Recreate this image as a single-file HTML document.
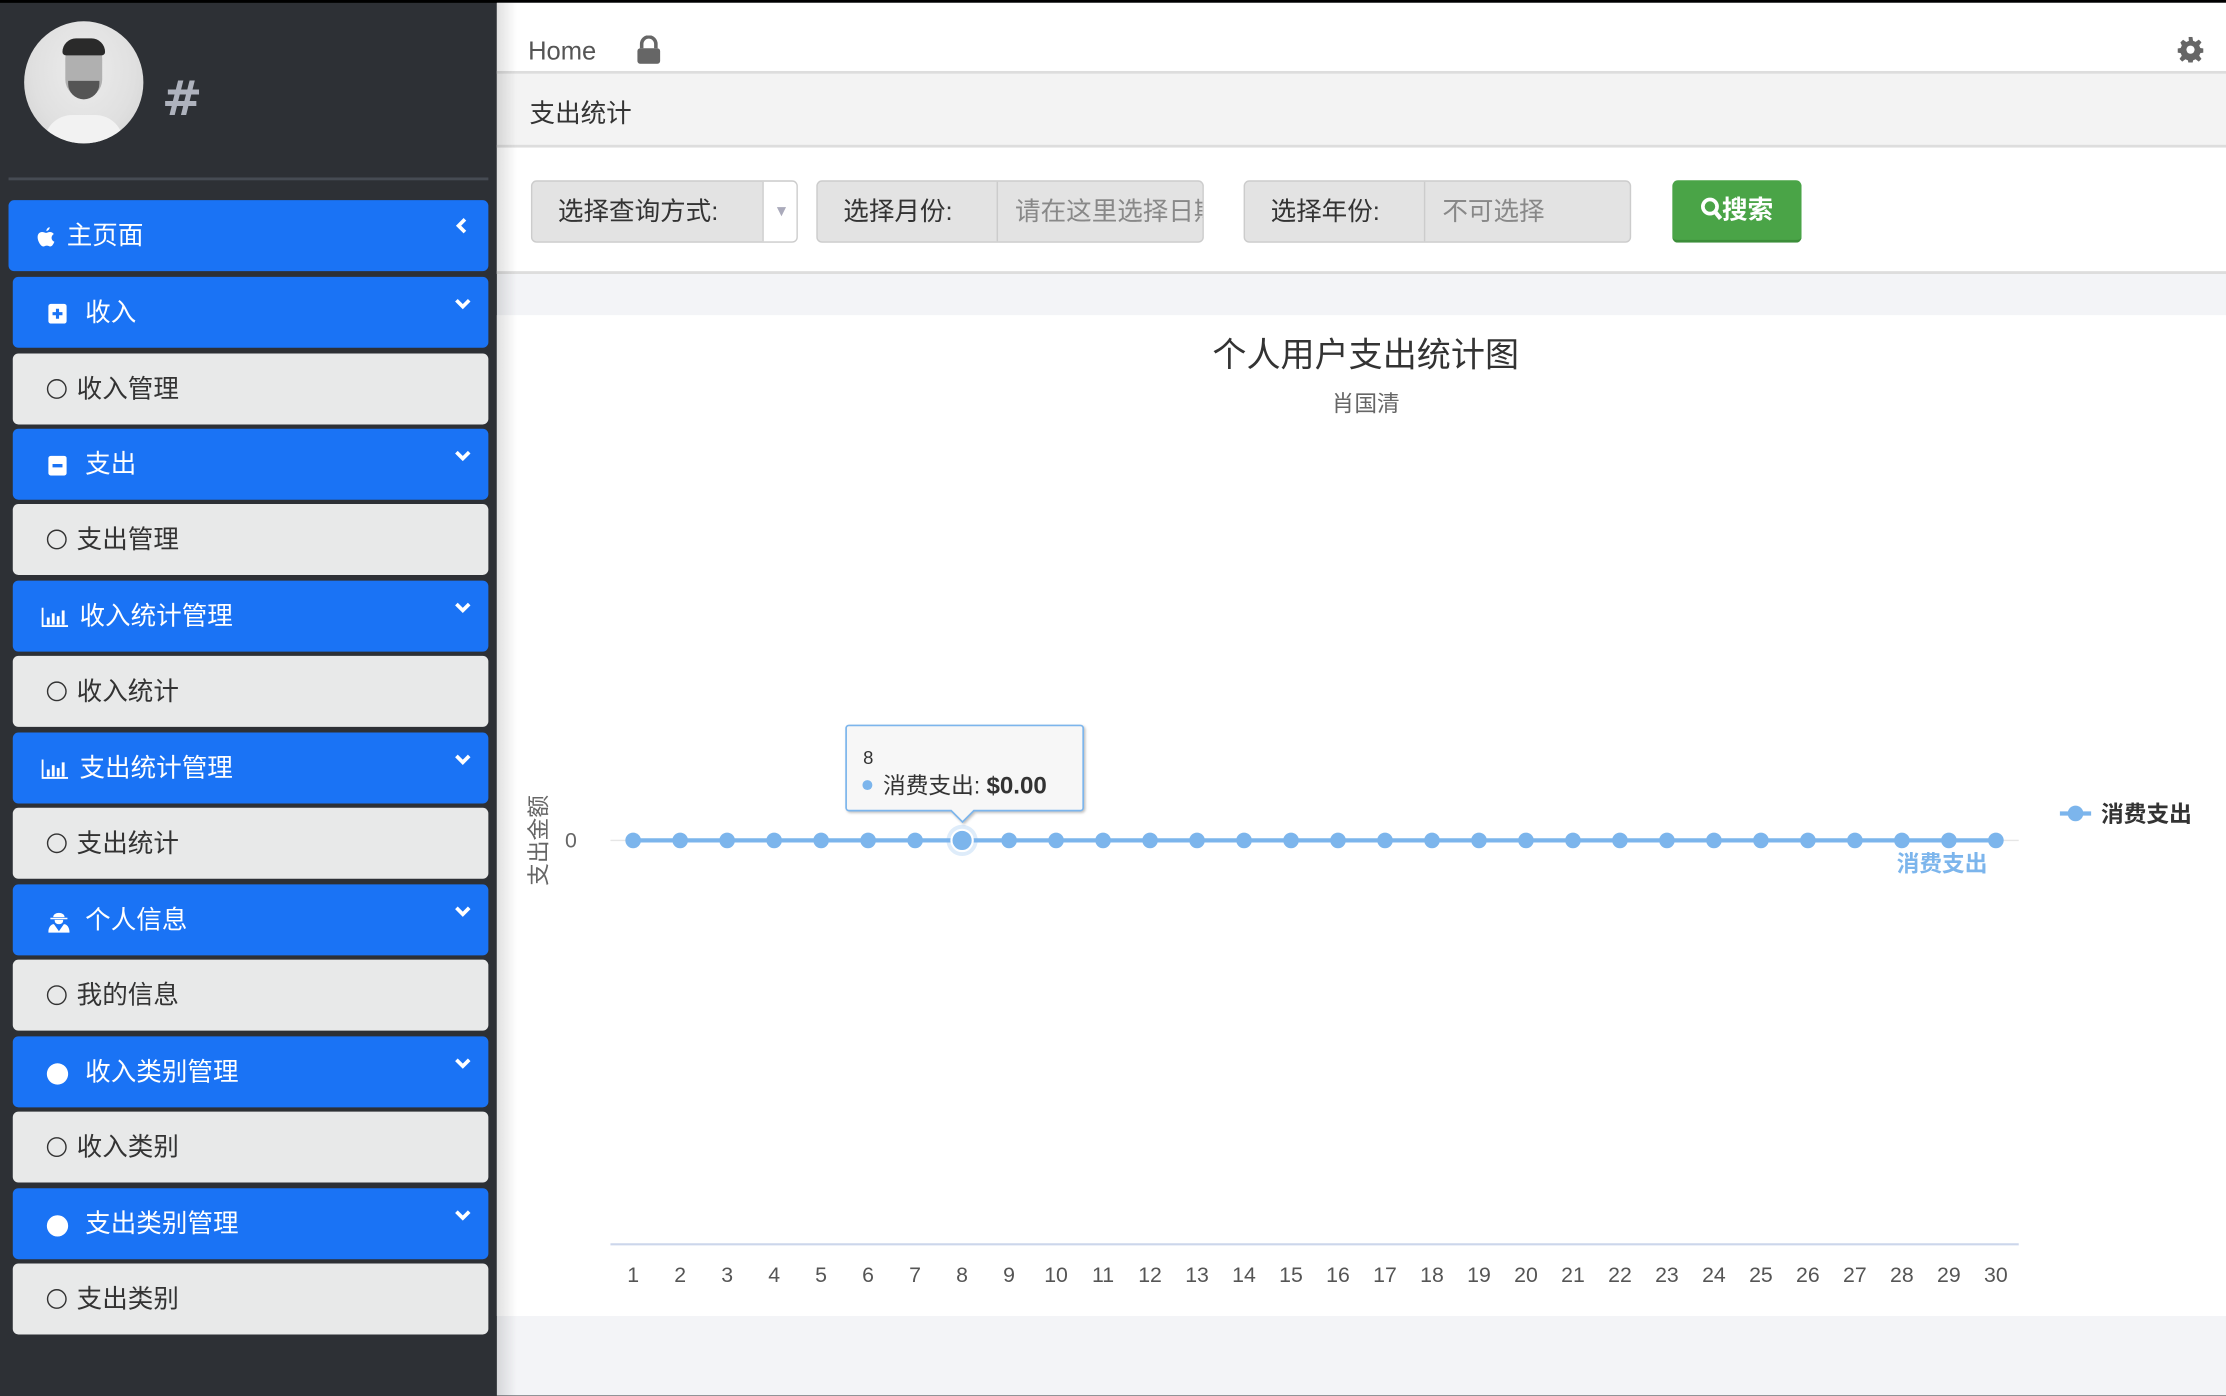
<!DOCTYPE html>
<html><head><meta charset="utf-8">
<style>
*{margin:0;padding:0;box-sizing:border-box}
html,body{width:2226px;height:1396px;overflow:hidden;background:#2d3035}
#w{position:absolute;left:0;top:0;width:1568px;height:983px;transform:scale(1.41964);transform-origin:0 0;font-family:"Liberation Sans","Noto Sans CJK SC",sans-serif}
.a{position:absolute}
.mi{position:absolute;left:9px;width:335px;height:50px;border-radius:4px;font-size:18px;line-height:50px;padding-left:25px}
.b{background:#1a73f5;color:#fff}
.g{background:#e8e9e9;color:#333}
.chev{position:absolute;right:12px;top:15px}
.circ{display:inline-block;width:14px;height:14px;border:1.6px solid #333;border-radius:50%;vertical-align:-1px;margin-right:7px}
.ico{display:inline-block;width:26px;text-align:left;vertical-align:middle;line-height:0}
.grp{position:absolute;top:127px;height:44px;border:1px solid #ccc;border-radius:4px;background:#e3e3e3;font-size:18px;line-height:42px;overflow:hidden}
.lab{position:absolute;left:0;top:0;height:42px;padding-left:18px;color:#333}
.inp{position:absolute;top:0;height:42px;border-left:1px solid #ccc;padding-left:12px;color:#888;white-space:nowrap;overflow:hidden}
</style></head><body><div id="w">
<div class="a" style="left:0;top:0;width:1568px;height:2px;background:#000"></div>
<div class="a" style="left:17px;top:15px;width:84px;height:86px;border-radius:50%;background:radial-gradient(ellipse at 50% 40%,#ececec 0,#e0e0e0 60%,#d0d0d0 100%);overflow:hidden">
 <div class="a" style="left:29px;top:18px;width:26px;height:36px;background:#b0b0b0;border-radius:8px 8px 13px 13px"></div>
 <div class="a" style="left:27px;top:12px;width:30px;height:12px;background:#2a2a2a;border-radius:12px 12px 3px 3px"></div>
 <div class="a" style="left:31px;top:42px;width:22px;height:13px;background:#555;border-radius:0 0 11px 11px"></div>
 <div class="a" style="left:14px;top:66px;width:56px;height:30px;background:#f2f2f2;border-radius:20px 20px 0 0"></div>
</div>
<div class="a" style="left:114px;top:50px;color:#aeb2bd;font-size:34px;font-weight:bold;font-family:'DejaVu Sans',sans-serif">#</div>
<div class="a" style="left:6px;top:125px;width:338px;height:2px;background:#464b53"></div>

<div class="mi b" style="left:6px;width:338px;top:141px;padding-left:20px"><span class="ico" style="width:21px"><svg width="13" height="15" viewBox="0 0 13 15"><path fill="#fff" d="M9 0c.1 1.2-.9 2.6-2.3 2.7C6.6 1.5 7.7.2 9 0zM6.5 4c.8 0 1.6-.6 2.7-.6 1 0 2 .5 2.7 1.4-2.3 1.3-2 4.6.4 5.5-.5 1.3-1.5 3.3-2.8 3.3-1 0-1.3-.6-2.5-.6s-1.5.6-2.5.6C2.8 13.6.5 9.9.5 7 .5 4.6 2 3.4 3.6 3.4c1.1 0 2 .6 2.9.6z"/></svg></span>主页面<svg class="a" style="right:15px;top:12px" width="8" height="12" viewBox="0 0 8 12"><path d="M6.5 1.5L2 6l4.5 4.5" fill="none" stroke="#fff" stroke-width="2.6"/></svg></div>

<div class="mi b" style="top:195px"><span class="ico"><svg width="13" height="14" viewBox="0 0 13 14"><rect width="13" height="14" rx="2" fill="#fff"/><path d="M6.5 3.5v7M3 7h7" stroke="#1a73f5" stroke-width="2.2"/></svg></span>收入<svg class="chev" width="12" height="8" viewBox="0 0 12 8"><path d="M1.5 1.5L6 6l4.5-4.5" fill="none" stroke="#fff" stroke-width="2.6"/></svg></div>
<div class="mi g" style="top:249px;padding-left:24px"><span class="circ"></span>收入管理</div>
<div class="mi b" style="top:302px"><span class="ico"><svg width="13" height="14" viewBox="0 0 13 14"><rect width="13" height="14" rx="2" fill="#fff"/><path d="M3 7h7" stroke="#1a73f5" stroke-width="2.4"/></svg></span>支出<svg class="chev" width="12" height="8" viewBox="0 0 12 8"><path d="M1.5 1.5L6 6l4.5-4.5" fill="none" stroke="#fff" stroke-width="2.6"/></svg></div>
<div class="mi g" style="top:355px;padding-left:24px"><span class="circ"></span>支出管理</div>
<div class="mi b" style="top:409px;padding-left:20px"><span class="ico" style="width:27px"><svg width="19" height="14" viewBox="0 0 19 14"><path d="M1 0v13h18" fill="none" stroke="#fff" stroke-width="1.3"/><rect x="4" y="7" width="2" height="5" fill="#fff"/><rect x="7.5" y="4" width="2" height="8" fill="#fff"/><rect x="11" y="6" width="2" height="6" fill="#fff"/><rect x="14.5" y="2" width="2" height="10" fill="#fff"/></svg></span>收入统计管理<svg class="chev" width="12" height="8" viewBox="0 0 12 8"><path d="M1.5 1.5L6 6l4.5-4.5" fill="none" stroke="#fff" stroke-width="2.6"/></svg></div>
<div class="mi g" style="top:462px;padding-left:24px"><span class="circ"></span>收入统计</div>
<div class="mi b" style="top:516px;padding-left:20px"><span class="ico" style="width:27px"><svg width="19" height="14" viewBox="0 0 19 14"><path d="M1 0v13h18" fill="none" stroke="#fff" stroke-width="1.3"/><rect x="4" y="7" width="2" height="5" fill="#fff"/><rect x="7.5" y="4" width="2" height="8" fill="#fff"/><rect x="11" y="6" width="2" height="6" fill="#fff"/><rect x="14.5" y="2" width="2" height="10" fill="#fff"/></svg></span>支出统计管理<svg class="chev" width="12" height="8" viewBox="0 0 12 8"><path d="M1.5 1.5L6 6l4.5-4.5" fill="none" stroke="#fff" stroke-width="2.6"/></svg></div>
<div class="mi g" style="top:569px;padding-left:24px"><span class="circ"></span>支出统计</div>
<div class="mi b" style="top:623px"><span class="ico"><svg width="15" height="16" viewBox="0 0 15 16"><path fill="#fff" d="M3.5 5C3.5 1 11.5 1 11.5 5zM1.5 5.5h12v1h-12zM4.5 7h6c0 2-1 3-3 3s-3-1-3-3zM0 16c0-4 2-6 4-6l3.5 5L11 10c2 0 4 2 4 6z"/></svg></span>个人信息<svg class="chev" width="12" height="8" viewBox="0 0 12 8"><path d="M1.5 1.5L6 6l4.5-4.5" fill="none" stroke="#fff" stroke-width="2.6"/></svg></div>
<div class="mi g" style="top:676px;padding-left:24px"><span class="circ"></span>我的信息</div>
<div class="mi b" style="top:730px;padding-left:24px"><span class="ico" style="width:27px"><span style="display:inline-block;width:15px;height:15px;background:#fff;border-radius:50%"></span></span>收入类别管理<svg class="chev" width="12" height="8" viewBox="0 0 12 8"><path d="M1.5 1.5L6 6l4.5-4.5" fill="none" stroke="#fff" stroke-width="2.6"/></svg></div>
<div class="mi g" style="top:783px;padding-left:24px"><span class="circ"></span>收入类别</div>
<div class="mi b" style="top:837px;padding-left:24px"><span class="ico" style="width:27px"><span style="display:inline-block;width:15px;height:15px;background:#fff;border-radius:50%"></span></span>支出类别管理<svg class="chev" width="12" height="8" viewBox="0 0 12 8"><path d="M1.5 1.5L6 6l4.5-4.5" fill="none" stroke="#fff" stroke-width="2.6"/></svg></div>
<div class="mi g" style="top:890px;padding-left:24px"><span class="circ"></span>支出类别</div>
<div class="a" style="left:350px;top:2px;width:1218px;height:981px;background:#f3f4f7"></div>
<div class="a" style="left:350px;top:2px;width:1218px;height:50px;background:#fff;border-bottom:2px solid #ddd"></div>
<div class="a" style="left:372px;top:26px;font-size:18px;color:#555">Home</div>
<svg class="a" style="left:448px;top:25px" width="18" height="20" viewBox="0 0 18 20"><path d="M4 9V6a5 5 0 0 1 10 0v3" fill="none" stroke="#666" stroke-width="2.5"/><rect x="1" y="9" width="16" height="11" rx="2" fill="#666"/></svg>
<svg class="a" style="left:1534px;top:26px" width="18" height="18" viewBox="0 0 20 20"><path fill="#666" d="M8.5 0h3l.5 3 2 .9 2.5-1.8 2.1 2.1-1.8 2.5.9 2 3 .5v3l-3 .5-.9 2 1.8 2.5-2.1 2.1-2.5-1.8-2 .9-.5 3h-3l-.5-3-2-.9-2.5 1.8-2.1-2.1 1.8-2.5-.9-2-3-.5v-3l3-.5.9-2L2.1 4.3 4.2 2.2l2.5 1.8 2-.9z"/><circle cx="10" cy="10" r="3.2" fill="#fff"/></svg>
<div class="a" style="left:350px;top:52px;width:1218px;height:52px;background:#f3f3f3;border-bottom:2px solid #ddd"></div>
<div class="a" style="left:373px;top:66px;font-size:18px;color:#333">支出统计</div>
<div class="a" style="left:350px;top:104px;width:1218px;height:89px;background:#fff;border-bottom:2px solid #ddd"></div>
<div class="grp" style="left:374px;width:188px"><div class="lab">选择查询方式:</div><div class="inp" style="left:162px;width:26px;background:#fff;padding:0;color:#aab;text-align:center;font-size:11px">&#9660;</div></div>
<div class="grp" style="left:575px;width:273px"><div class="lab">选择月份:</div><div class="inp" style="left:126px;width:147px">请在这里选择日期</div></div>
<div class="grp" style="left:876px;width:273px"><div class="lab">选择年份:</div><div class="inp" style="left:126px;width:147px">不可选择</div></div>
<div class="a" style="left:1178px;top:127px;width:91px;height:44px;background:#4aa447;border-radius:4px;border-bottom:2px solid #3c8e3a;color:#fff;font-size:18px;line-height:42px;text-align:center;font-weight:bold"><svg width="15" height="17" viewBox="0 0 15 17" style="vertical-align:-2px"><circle cx="6.5" cy="6.5" r="5" fill="none" stroke="#fff" stroke-width="2.6"/><path d="M10 10l4 5" stroke="#fff" stroke-width="3"/></svg>搜索</div>
<div class="a" style="left:350px;top:222px;width:1218px;height:705px;background:#fff"></div>
<div class="a" style="left:350px;top:2px;width:14px;height:981px;background:linear-gradient(90deg,rgba(0,0,0,.12),rgba(0,0,0,0))"></div>
<div class="a" style="left:350px;top:230px;width:1224px;text-align:center;font-size:24px;color:#333">个人用户支出统计图</div>
<div class="a" style="left:350px;top:271px;width:1224px;text-align:center;font-size:16px;color:#666">肖国清</div>
<div class="a" style="left:378px;top:592px;transform:translate(-50%,-50%) rotate(-90deg);font-size:16px;color:#666;white-space:nowrap">支出金额</div>
<div class="a" style="left:398px;top:584px;font-size:15px;color:#666">0</div>
<svg class="a" style="left:0;top:0" width="1568" height="983">
<line x1="430" y1="592" x2="1422" y2="592" stroke="#e6e6e6" stroke-width="1"/>
<line x1="430" y1="876.5" x2="1422" y2="876.5" stroke="#ccd6eb" stroke-width="1.5"/>
<line x1="446" y1="592" x2="1406" y2="592" stroke="#7cb5ec" stroke-width="3"/>
<g fill="#7cb5ec">
<circle cx="446" cy="592" r="5.5"/><circle cx="479.1" cy="592" r="5.5"/><circle cx="512.2" cy="592" r="5.5"/><circle cx="545.3" cy="592" r="5.5"/><circle cx="578.4" cy="592" r="5.5"/><circle cx="611.5" cy="592" r="5.5"/><circle cx="644.6" cy="592" r="5.5"/><circle cx="710.8" cy="592" r="5.5"/><circle cx="743.9" cy="592" r="5.5"/><circle cx="777" cy="592" r="5.5"/><circle cx="810.1" cy="592" r="5.5"/><circle cx="843.2" cy="592" r="5.5"/><circle cx="876.3" cy="592" r="5.5"/><circle cx="909.4" cy="592" r="5.5"/><circle cx="942.5" cy="592" r="5.5"/><circle cx="975.6" cy="592" r="5.5"/><circle cx="1008.7" cy="592" r="5.5"/><circle cx="1041.8" cy="592" r="5.5"/><circle cx="1074.9" cy="592" r="5.5"/><circle cx="1108" cy="592" r="5.5"/><circle cx="1141.1" cy="592" r="5.5"/><circle cx="1174.2" cy="592" r="5.5"/><circle cx="1207.3" cy="592" r="5.5"/><circle cx="1240.4" cy="592" r="5.5"/><circle cx="1273.5" cy="592" r="5.5"/><circle cx="1306.6" cy="592" r="5.5"/><circle cx="1339.7" cy="592" r="5.5"/><circle cx="1372.8" cy="592" r="5.5"/><circle cx="1405.9" cy="592" r="5.5"/>
</g>
<circle cx="677.7" cy="592" r="11" fill="#7cb5ec" opacity=".25"/>
<circle cx="677.7" cy="592" r="7.5" fill="#7cb5ec" stroke="#fff" stroke-width="1.5"/>
<path d="M598 511h163a2 2 0 0 1 2 2v56a2 2 0 0 1-2 2H686l-8 8-8-8H598a2 2 0 0 1-2-2v-56a2 2 0 0 1 2-2z" fill="#f7f7f7" stroke="#7cb5ec" stroke-width="1.2" style="filter:drop-shadow(1px 1px 1px rgba(0,0,0,.25))"/>
<circle cx="611" cy="553" r="3.5" fill="#7cb5ec"/>
<line x1="1451" y1="573" x2="1473" y2="573" stroke="#7cb5ec" stroke-width="3"/><circle cx="1462" cy="573" r="5.5" fill="#7cb5ec"/>
<g font-family="Liberation Sans,Noto Sans CJK SC,sans-serif" font-size="15" fill="#555" text-anchor="middle">
<text x="446" y="903">1</text><text x="479.1" y="903">2</text><text x="512.2" y="903">3</text><text x="545.3" y="903">4</text><text x="578.4" y="903">5</text><text x="611.5" y="903">6</text><text x="644.6" y="903">7</text><text x="677.7" y="903">8</text><text x="710.8" y="903">9</text><text x="743.9" y="903">10</text><text x="777" y="903">11</text><text x="810.1" y="903">12</text><text x="843.2" y="903">13</text><text x="876.3" y="903">14</text><text x="909.4" y="903">15</text><text x="942.5" y="903">16</text><text x="975.6" y="903">17</text><text x="1008.7" y="903">18</text><text x="1041.8" y="903">19</text><text x="1074.9" y="903">20</text><text x="1108" y="903">21</text><text x="1141.1" y="903">22</text><text x="1174.2" y="903">23</text><text x="1207.3" y="903">24</text><text x="1240.4" y="903">25</text><text x="1273.5" y="903">26</text><text x="1306.6" y="903">27</text><text x="1339.7" y="903">28</text><text x="1372.8" y="903">29</text><text x="1405.9" y="903">30</text>
</g>
<g font-family="Liberation Sans,Noto Sans CJK SC,sans-serif">
<text x="608" y="538" font-size="13" fill="#333">8</text>
<text x="622" y="559" font-size="16" fill="#333">消费支出: <tspan font-weight="bold" font-size="17">$0.00</tspan></text>
<text x="1480" y="579" font-size="16" font-weight="bold" fill="#333">消费支出</text>
<text x="1368" y="614" font-size="16" font-weight="bold" fill="#7cb5ec" text-anchor="middle">消费支出</text>
</g>
</svg>
</div></body></html>
